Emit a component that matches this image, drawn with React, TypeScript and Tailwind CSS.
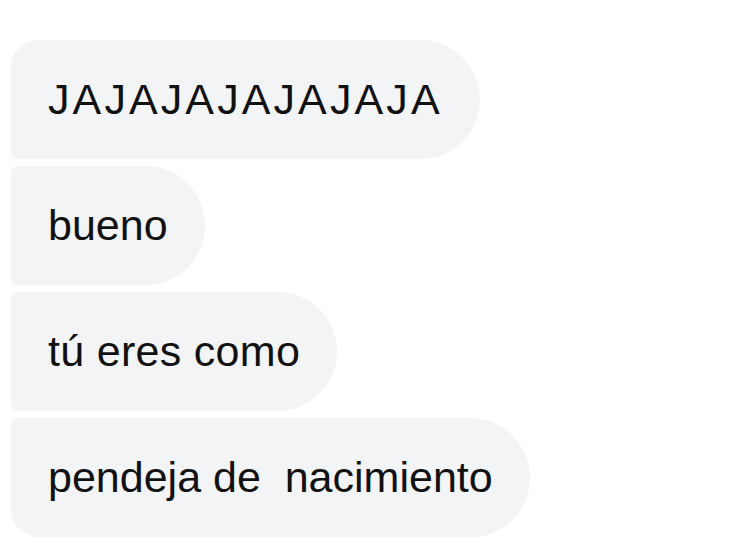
const messages = [
  { text: "JAJAJAJAJAJAJA", corners: "rounded-tl-[28px] rounded-bl-[6px]", extra: "tracking-[3.1px]" },
  { text: "bueno", corners: "rounded-tl-[6px] rounded-bl-[6px]", extra: "" },
  { text: "tú eres como", corners: "rounded-tl-[6px] rounded-bl-[6px]", extra: "tracking-[0.3px]" },
  { text: "pendeja de  nacimiento", corners: "rounded-tl-[6px] rounded-bl-[28px]", extra: "" },
];

export default function App() {
  return (
    <div className="w-[750px] h-[546px] bg-white overflow-hidden font-['Liberation_Sans',Arial,sans-serif]">
      {/* Incoming message group */}
      <div className="flex flex-col items-start gap-[7px] pt-[40px] pl-[11px]">
        {messages.map((m, i) => (
          <div
            key={i}
            className={`h-[119px] flex items-center px-[37px] bg-[#f3f4f6] rounded-r-[60px] ${m.corners}`}
          >
            <span className={`text-[43px] leading-none text-[#111111] whitespace-pre ${m.extra}`}>
              {m.text}
            </span>
          </div>
        ))}
      </div>
    </div>
  );
}
